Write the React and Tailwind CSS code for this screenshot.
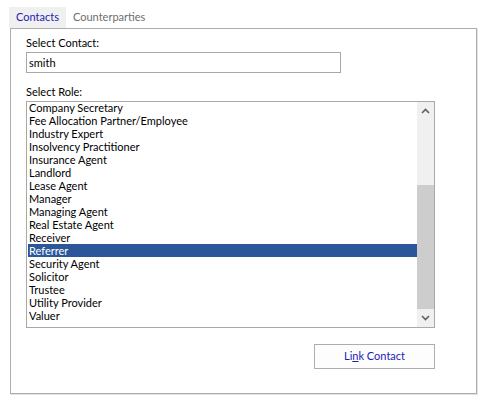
import React, { useState } from 'react';

const roles = [
    'Company Secretary',
    'Fee Allocation Partner/Employee',
    'Industry Expert',
    'Insolvency Practitioner',
    'Insurance Agent',
    'Landlord',
    'Lease Agent',
    'Manager',
    'Managing Agent',
    'Real Estate Agent',
    'Receiver',
    'Referrer',
    'Security Agent',
    'Solicitor',
    'Trustee',
    'Utility Provider',
    'Valuer',
];

function Chevron({ up }) {
    return (
        <svg width="9" height="6" viewBox="0 0 9 6" className="text-[#606060]">
            {up ? (
                <path d="M1 5 L4.5 1.5 L8 5" fill="none" stroke="currentColor" strokeWidth="1.6" />
            ) : (
                <path d="M1 1 L4.5 4.5 L8 1" fill="none" stroke="currentColor" strokeWidth="1.6" />
            )}
        </svg>
    );
}

export default function App() {
    const [contact, setContact] = useState('smith');
    const [selected, setSelected] = useState('Referrer');

    return (
        <div className="w-[481px] h-[401px] bg-white text-[11px] text-black font-['Lato',sans-serif] overflow-hidden">
            {/* tabs */}
            <div className="flex pl-[9px] pt-[7px] h-[28px]">
                <div className="w-[57px] h-[21px] bg-[#f0f0f0] text-[#1c1cb4] flex items-center justify-center">
                    Contacts
                </div>
                <div className="h-[21px] pl-[7px] text-[#6d6d6d] flex items-center">Counterparties</div>
            </div>

            {/* panel */}
            <div className="ml-[10px] w-[467px] h-[366px] border border-[#adadad] shadow-[1px_1px_0_#e3e3e3] pl-[15px] flex flex-col">
                <div className="mt-[6px] h-[16px] leading-[16px]">Select Contact:</div>
                <input
                    value={contact}
                    onChange={(e) => setContact(e.target.value)}
                    className="mt-[1px] w-[315px] h-[21px] border border-[#a8a8a8] px-[2px] outline-none text-[11px]"
                />
                <div className="mt-[11px] h-[16px] leading-[16px]">Select Role:</div>
                <div className="mt-[1px] w-[409px] h-[227px] border border-[#a8a8a8] flex overflow-hidden">
                    <div className="flex-1 pl-[1px] mt-[-1px]">
                        {roles.map((r) => (
                            <div
                                key={r}
                                onClick={() => setSelected(r)}
                                className={
                                    'h-[13px] leading-[13px] pl-[1px] whitespace-nowrap ' +
                                    (r === selected ? 'bg-[#2b579a] text-white' : '')
                                }
                            >
                                {r}
                            </div>
                        ))}
                    </div>
                    <div className="w-[17px] bg-[#f0f0f0] flex flex-col">
                        <div className="h-[17px] flex items-center justify-center">
                            <Chevron up />
                        </div>
                        <div className="h-[66px]" />
                        <div className="h-[124px] bg-[#cdcdcd]" />
                        <div className="flex-1 flex items-center justify-center">
                            <Chevron />
                        </div>
                    </div>
                </div>
                <div className="mt-[16px] ml-[288px] w-[121px] h-[25px] border border-[#adadad] bg-[#fdfdfd] flex items-center justify-center text-[#1c1cb4]">
                    Li<span className="underline">n</span>k Contact
                </div>
            </div>
        </div>
    );
}
